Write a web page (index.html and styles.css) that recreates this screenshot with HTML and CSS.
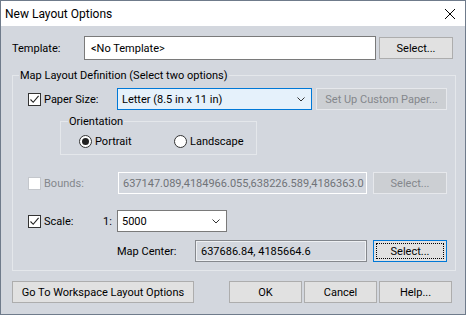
FILE: index.html
```html
<!DOCTYPE html>
<html lang="en">
<head>
  <meta charset="UTF-8">
  <title>New Layout Options</title>
  <link rel="stylesheet" href="styles.css">
</head>
<body>

  <div class="dialog">

    <!-- заголовок окна -->
    <div class="titlebar">
      <span class="title">New Layout Options</span>
      <svg class="close" viewBox="0 0 10 10" width="10" height="10">
        <path d="M0 0L10 10M10 0L0 10" stroke="#000" stroke-width="1" fill="none"/>
      </svg>
    </div>

    <div class="content">

      <div class="row template-row">
        <span class="template-label">Template:</span>
        <div class="field template-field">&lt;No Template&gt;</div>
        <button class="btn template-btn">Select...</button>
      </div>

      <fieldset class="group">
        <legend>Map Layout Definition (Select two options)</legend>

        <div class="row paper-row">
          <label class="check paper-check">
            <span class="box"><svg viewBox="0 0 11 11" width="11" height="11"><path d="M1.5 5.5L4.2 8.3L9.6 1.8" stroke="#222" stroke-width="1.1" fill="none"/></svg></span>
            Paper Size:
          </label>
          <div class="combo combo-active paper-combo">
            <span>Letter (8.5 in x 11 in)</span>
            <svg class="chev" viewBox="0 0 8 5" width="8" height="5"><path d="M0.5 0.5L4 4L7.5 0.5" stroke="#333" fill="none"/></svg>
          </div>
          <button class="btn custom-btn" disabled>Set Up Custom Paper...</button>
        </div>

        <fieldset class="orient">
          <legend>Orientation</legend>
          <div class="radios">
            <label class="radio portrait"><span class="dot on"></span>Portrait</label>
            <label class="radio"><span class="dot"></span>Landscape</label>
          </div>
        </fieldset>

        <div class="row bounds-row">
          <label class="check bounds-check off">
            <span class="box"></span>
            Bounds:
          </label>
          <div class="field field-off bounds-field">637147.089,4184966.055,638226.589,4186363.0</div>
          <button class="btn side-btn" disabled>Select...</button>
        </div>

        <div class="row scale-row">
          <label class="check scale-check">
            <span class="box"><svg viewBox="0 0 11 11" width="11" height="11"><path d="M1.5 5.5L4.2 8.3L9.6 1.8" stroke="#222" stroke-width="1.1" fill="none"/></svg></span>
            Scale:
          </label>
          <span class="ratio">1:</span>
          <div class="combo scale-combo">
            <span>5000</span>
            <svg class="chev" viewBox="0 0 8 5" width="8" height="5"><path d="M0.5 0.5L4 4L7.5 0.5" stroke="#333" fill="none"/></svg>
          </div>
        </div>

        <div class="row center-row">
          <span class="center-label">Map Center:</span>
          <div class="field field-ro center-field">637686.84, 4185664.6</div>
          <button class="btn side-btn focused"><span>Select...</span></button>
        </div>
      </fieldset>

      <div class="footer">
        <button class="btn workspace-btn">Go To Workspace Layout Options</button>
        <div class="actions">
          <button class="btn action-btn">OK</button>
          <button class="btn action-btn">Cancel</button>
          <button class="btn action-btn">Help...</button>
        </div>
      </div>

    </div>
  </div>

</body>
</html>
```

FILE: styles.css
```css
body {
  margin: 0;
  padding: 0;
  font-family: Roboto, "Liberation Sans", sans-serif;
  font-size: 11px;
  color: #000;
}

/* окно диалога */
.dialog {
  width: 466px;
  height: 315px;
  box-sizing: border-box;
  border: 1px solid #6f7b8b;
  background-color: #d3d7de;
  display: flex;
  flex-direction: column;
}

.titlebar {
  height: 25px;
  background-color: #fff;
  display: flex;
  align-items: center;
  padding-left: 4px;
  padding-right: 10px;
  flex-shrink: 0;
}

.title {
  flex: 1;
  font-size: 12px;
}

.content {
  padding: 0 9px 0 11px;
}

.row {
  display: flex;
  align-items: center;
}

/* кнопки */
.btn {
  font-family: inherit;
  font-size: 11px;
  color: #000;
  background-color: #e1e1e1;
  border: 1px solid #adadad;
  height: 22px;
  padding: 0;
  margin: 0;
  box-sizing: border-box;
}

.btn:disabled {
  color: #84878c;
  background-color: #cccfd3;
  border-color: #e6e8ec;
}

.btn.focused {
  border: 1px solid #0078d7;
  padding: 2px;
}

.btn.focused span {
  display: flex;
  height: 100%;
  align-items: center;
  justify-content: center;
  border: 1px dotted #000;
  box-sizing: border-box;
}

/* поля ввода */
.field {
  height: 22px;
  box-sizing: border-box;
  border: 1px solid #7a7a7a;
  background-color: #fff;
  display: flex;
  align-items: center;
  padding-left: 4px;
  white-space: nowrap;
  overflow: hidden;
}

.field-off {
  border-color: #fff;
  background-color: #d3d7de;
  color: #707378;
}

.field-ro {
  border-color: #85888d;
  box-shadow: inset 0 0 0 1px #eef0f3;
  background-color: #d3d7de;
}

.combo {
  height: 22px;
  box-sizing: border-box;
  border: 1px solid #7a7a7a;
  background-color: #fff;
  display: flex;
  align-items: center;
  justify-content: space-between;
  padding: 0 6px 0 4px;
}

.combo-active {
  background-color: #e5f1fb;
  border-color: #0078d7;
}

/* чекбоксы и радио */
.check {
  display: flex;
  align-items: center;
  gap: 3px;
}

.box {
  width: 13px;
  height: 13px;
  box-sizing: border-box;
  border: 1px solid #333;
  background-color: #fff;
  display: flex;
  align-items: center;
  justify-content: center;
}

.check.off {
  color: #84878c;
}

.check.off .box {
  border-color: #c4c7cc;
}

.radio {
  display: flex;
  align-items: center;
  gap: 3px;
}

.dot {
  width: 13px;
  height: 13px;
  box-sizing: border-box;
  border: 1px solid #333;
  border-radius: 50%;
  background-color: #fff;
  display: flex;
  align-items: center;
  justify-content: center;
}

.dot.on::after {
  content: "";
  width: 7px;
  height: 7px;
  border-radius: 50%;
  background-color: #222;
}

/* строка шаблона */
.template-row {
  margin-top: 10px;
}

.template-label {
  width: 72px;
}

.template-field {
  width: 292px;
  height: 24px;
  padding-left: 6px;
}

.template-btn {
  width: 74px;
  margin-left: 3px;
}

/* группы */
.group {
  margin: 8px 0 0 0;
  padding: 0 0 8px 0;
  border: 1px solid #e4e7eb;
  width: 444px;
  box-sizing: border-box;
  min-width: 0;
}

.group legend {
  margin-left: 6px;
  padding: 0 1px;
  line-height: 15px;
}

.paper-row {
  margin-top: 5px;
  padding-left: 15px;
}

.paper-check {
  width: 89px;
}

.paper-combo {
  width: 195px;
}

.custom-btn {
  width: 131px;
  margin-left: 4px;
}

.orient {
  margin: 4px 0 0 47px;
  padding: 0 0 5px 18px;
  border: 1px solid #e4e7eb;
  width: 197px;
  box-sizing: border-box;
  min-width: 0;
}

.orient legend {
  margin-left: -11px;
  padding: 0 1px;
  line-height: 15px;
}

.radios {
  display: flex;
  margin-top: 5px;
  height: 15px;
}

.portrait {
  width: 95px;
}

.bounds-row {
  margin-top: 17px;
  padding-left: 15px;
}

.bounds-check {
  width: 90px;
}

.bounds-field {
  width: 249px;
  padding-left: 4px;
}

.side-btn {
  width: 74px;
  margin-left: 6px;
}

.scale-row {
  margin-top: 16px;
  padding-left: 15px;
}

.scale-check {
  width: 75px;
}

.ratio {
  width: 14px;
}

.scale-combo {
  width: 110px;
}

.center-row {
  margin-top: 8px;
  padding-left: 104px;
}

.center-label {
  width: 78px;
}

.center-field {
  width: 172px;
  padding-left: 5px;
}

/* нижние кнопки */
.footer {
  margin-top: 10px;
  display: flex;
  justify-content: space-between;
  width: 440px;
}

.workspace-btn {
  width: 182px;
}

.actions {
  display: flex;
  gap: 2px;
}

.action-btn {
  width: 73px;
}
```
